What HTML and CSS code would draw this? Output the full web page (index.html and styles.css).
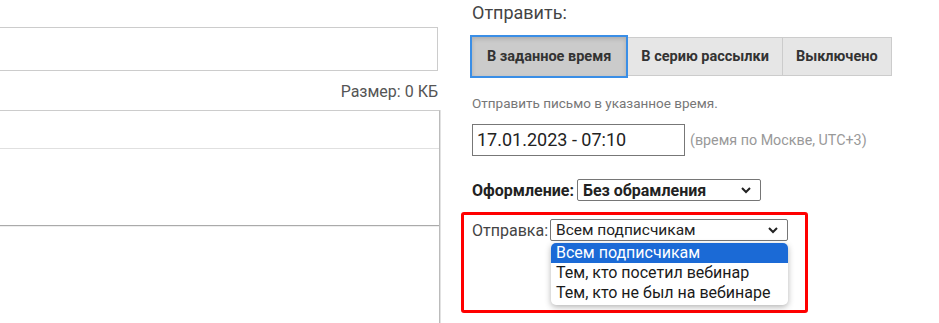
FILE: index.html
```html
<!DOCTYPE html>
<html lang="ru">
<head>
    <meta charset="UTF-8">
    <title>Рассылка</title>
    <link rel="stylesheet" href="styles.css">
</head>
<body>
    <div class="page">
        <div class="editor-col">
            <div class="subject-input"></div>
            <div class="size-info">Размер: 0 КБ</div>
            <div class="editor">
                <div class="editor-toolbar"></div>
                <div class="editor-body"></div>
                <div class="editor-footer"></div>
            </div>
        </div>

        <div class="send-col">
            <div class="send-title">Отправить:</div>
            <div class="btn-group">
                <div class="btn active">В заданное время</div>
                <div class="btn">В серию рассылки</div>
                <div class="btn">Выключено</div>
            </div>
            <div class="hint">Отправить письмо в указанное время.</div>
            <div class="date-row">
                <div class="date-input">17.01.2023 - 07:10</div>
                <span class="tz">(время по Москве, UTC+3)</span>
            </div>
            <div class="design-row">
                <b>Оформление:</b>
                <div class="select select-bold">
                    <span>Без обрамления</span>
                    <svg width="12" height="8" viewBox="0 0 12 8"><path d="M2 2l4 4 4-4" fill="none" stroke="#222" stroke-width="2"/></svg>
                </div>
            </div>
            <div class="highlight">
                <div class="target-row">
                    <span>Отправка:</span>
                    <div class="select select-target">
                        <span>Всем подписчикам</span>
                        <svg width="12" height="8" viewBox="0 0 12 8"><path d="M2 2l4 4 4-4" fill="none" stroke="#222" stroke-width="2"/></svg>
                        <ul class="options">
                            <li class="selected">Всем подписчикам</li>
                            <li>Тем, кто посетил вебинар</li>
                            <li>Тем, кто не был на вебинаре</li>
                        </ul>
                    </div>
                </div>
            </div>
        </div>
    </div>
</body>
</html>
```

FILE: styles.css
```css
* {
    margin: 0;
    padding: 0;
    box-sizing: border-box;
}

body {
    font-family: Roboto, sans-serif;
    color: #333;
    background: #fff;
    overflow: hidden;
}

.page {
    display: flex;
    height: 323px;
}

/* left column */
.editor-col {
    width: 440px;
    padding-top: 27px;
}

.subject-input {
    width: 438px;
    height: 44px;
    border: 1px solid #ccc;
    border-left: none;
}

.size-info {
    width: 438px;
    text-align: right;
    font-size: 16px;
    color: #555;
    margin-top: 11px;
    line-height: 19px;
}

.editor {
    margin-top: 9px;
    border-top: 1px solid #ccc;
    border-right: 1px solid #bbb;
    box-shadow: 1px 0 0 #e2e2e2;
    height: 220px;
}

.editor-toolbar {
    height: 38px;
    border-bottom: 1px solid #e0e0e0;
}

.editor-body {
    height: 77px;
    border-bottom: 1px solid #aaa;
    box-shadow: 0 1px 0 #eee;
}

/* right column */
.send-col {
    margin-left: 30px;
    width: 440px;
}

.send-title {
    font-size: 18px;
    color: #444;
    line-height: 22px;
    margin-top: 2px;
    padding-left: 2px;
}

.btn-group {
    display: flex;
    margin-top: 11px;
}

.btn {
    font-size: 14.5px;
    font-weight: bold;
    color: #333;
    background: #e6e6e6;
    border: 1px solid #ccc;
    border-left: none;
    height: 39px;
    margin-top: 2px;
    padding: 0 13px;
    display: flex;
    align-items: center;
}

.btn.active {
    background: #cbcbcb;
    border: 2px solid #3a8ee6;
    height: 43px;
    margin-top: 0;
    padding: 0 15px;
    box-shadow: inset 0 2px 4px rgba(0, 0, 0, 0.15);
}

.hint {
    font-size: 13.5px;
    color: #777;
    margin-top: 16px;
    padding-left: 2px;
    line-height: 18px;
}

.date-row {
    display: flex;
    align-items: center;
    margin-top: 12px;
    padding-left: 2px;
}

.date-input {
    width: 213px;
    height: 32px;
    border: 1px solid #777;
    font-size: 18px;
    color: #222;
    padding-left: 4px;
    line-height: 30px;
}

.tz {
    font-size: 14.3px;
    color: #999;
    margin-left: 5px;
}

.design-row {
    display: flex;
    align-items: center;
    margin-top: 23px;
    padding-left: 2px;
    font-size: 16px;
    color: #222;
}

.select {
    position: relative;
    display: flex;
    align-items: center;
    justify-content: space-between;
    border: 1px solid #767676;
    border-radius: 2px;
    height: 22px;
    padding: 0 8px 0 5px;
    color: #222;
}

.select-bold {
    width: 184px;
    margin-left: 3px;
    font-weight: bold;
    font-size: 16px;
}

.highlight {
    margin-top: 11px;
    margin-left: -9px;
    width: 347px;
    height: 101px;
    border: 3px solid #f00;
    border-radius: 3px;
    padding: 4px 0 0 8px;
}

.target-row {
    display: flex;
    align-items: center;
    font-size: 16px;
    color: #444;
}

.select-target {
    width: 238px;
    margin-left: 2px;
    font-size: 15.5px;
}

/* open dropdown */
.options {
    position: absolute;
    top: 23px;
    left: 0;
    width: 237px;
    list-style: none;
    background: #fff;
    border-radius: 5px;
    box-shadow: 0 2px 6px rgba(0, 0, 0, 0.3);
    overflow: hidden;
    padding-bottom: 2px;
}

.options li {
    font-size: 16px;
    line-height: 20px;
    height: 20px;
    padding-left: 5px;
    color: #1a1a1a;
    white-space: nowrap;
}

.options li.selected {
    background: #1b6ad6;
    color: #fff;
}
```
